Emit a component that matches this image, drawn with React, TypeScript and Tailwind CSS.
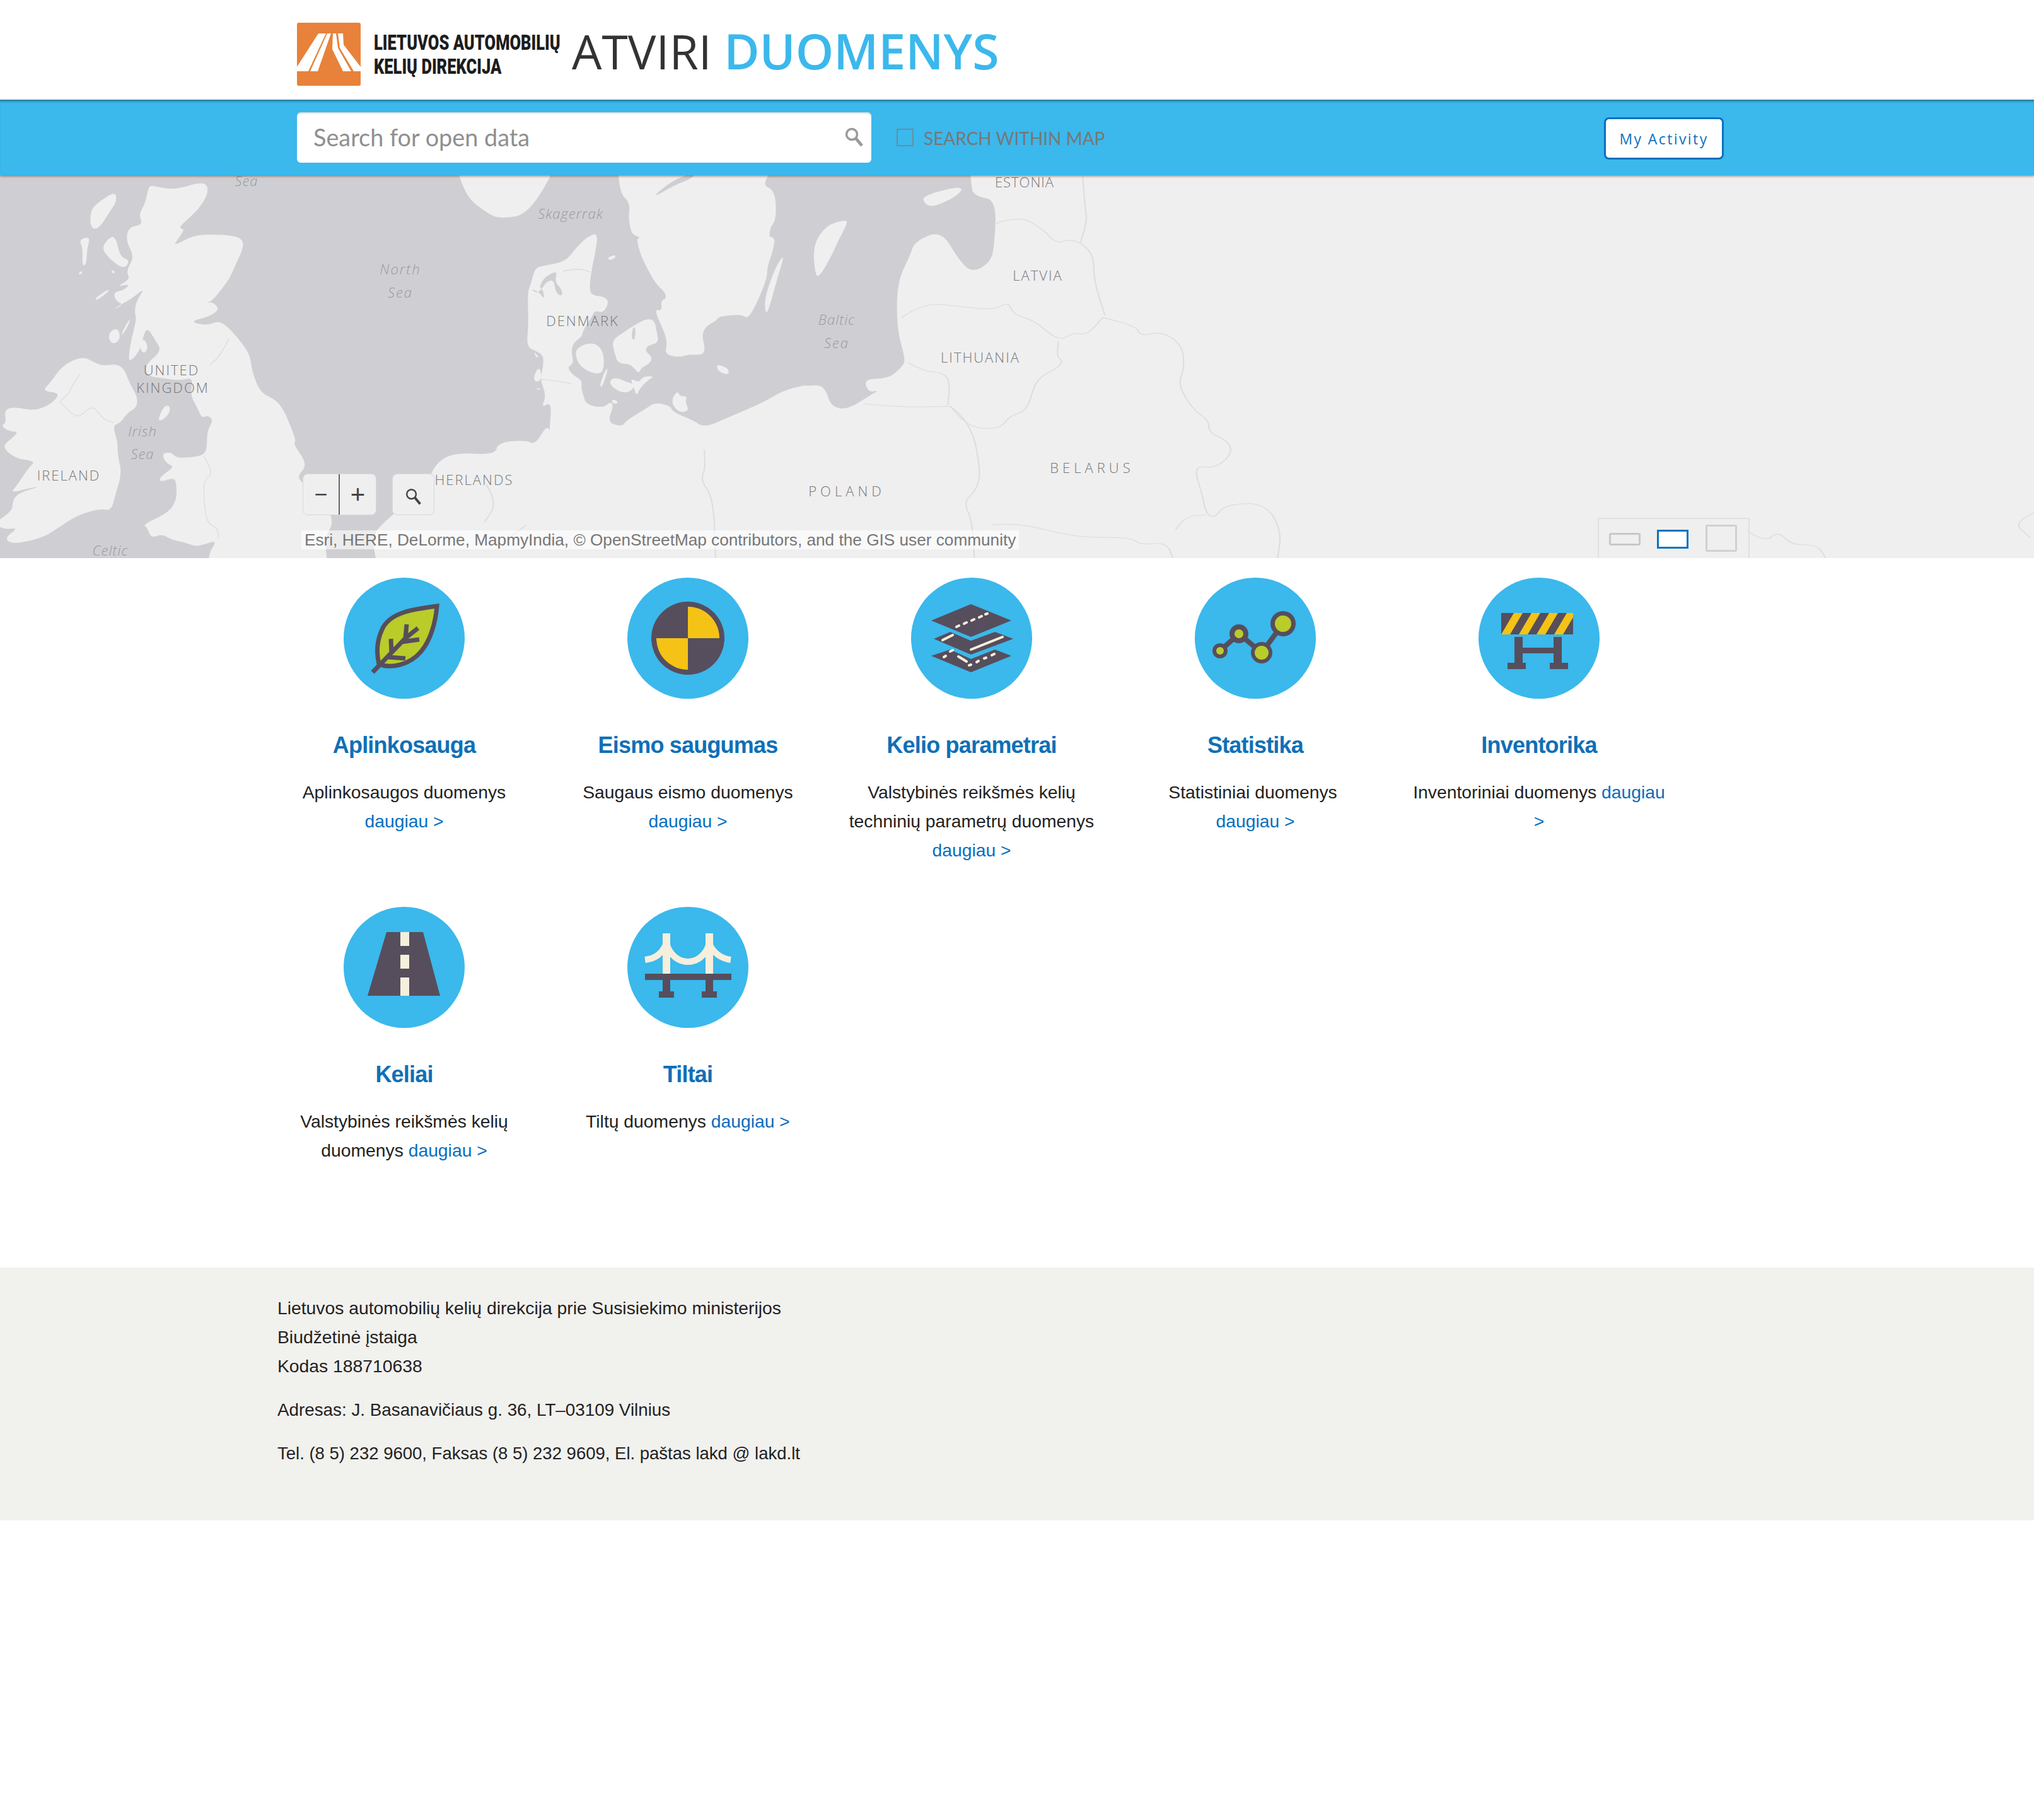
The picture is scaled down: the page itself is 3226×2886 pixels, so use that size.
import type { ReactNode } from "react";

const DARK = "#564e5c";
const CREAM = "#f5efdc";
const YELLOW = "#f4c315";
const GREEN = "#b9cc2a";
const WATER = "#cfcfd3";
const LAND = "#efefef";

const waterPoints =
  "-300,-300 2193,-300 2193,70 2208,105 2253,120 2248,310 2238,370 2198,410 2168,360 2128,240 2068,285 2058,340 2028,450 2028,640 2048,760 2038,790 2008,835 1953,835 1963,890 1988,880 1968,900 1915,960 1878,945 1868,880 1848,855 1778,880 1733,920 1733,1100 1250,1100 1240,1010 1210,1100 1190,1080 1125,1090 1120,1140 1030,1130 985,1170 960,1280 885,1380 830,1480 900,1800 -300,1800";

// traced on the wide map, overview scale
const overviewLand = [
  // Norway
  "1020,-100 1050,100 1100,170 1130,195 1200,175 1280,-100",
  // Sweden, north part
  "1395,-100 1400,90 1425,130 1420,200 1435,290 1740,290 1740,230 1755,200 1753,80 1718,55 1793,-100",
  // Gotland, Saaremaa
  "1908,200 1918,205 1893,290 1878,350 1853,425 1843,420 1838,300 1868,220",
  "2088,100 2178,60 2168,100 2108,150 2088,130",
];

const lakes = ["1470,115 1525,60 1568,30 1568,10 1520,40"];

// traced around Denmark, 3x from (800,380)
const balticLand = [
  // Jutland and the German coast
  "445,-35 435,50 412,160 405,230 415,265 480,272 497,300 470,350 430,335 415,370 375,430 370,460 330,490 318,530 330,590 300,605 320,640 370,670 365,700 375,740 390,785 470,800 505,770 520,790 490,870 560,890 580,860 680,800 715,775 790,790 800,820 900,860 950,895 1080,840 1240,770 1340,710 1500,680 1510,1000 210,1000 215,900 225,770 175,800 200,740 170,670 185,600 185,550 150,530 105,510 115,400 110,250 125,215 145,135 185,125 290,105 340,40 390,-10",
  // South Sweden
  "625,-40 640,50 670,120 720,210 765,250 770,280 745,290 750,340 710,330 780,480 760,545 830,560 880,545 945,550 955,510 940,460 955,415 1010,385 1020,365 1130,355 1165,380 1250,190 1250,130 1280,50 1290,-40",
  // Zealand
  "510,480 570,440 620,405 680,375 715,385 725,440 735,490 680,505 670,530 705,560 690,590 650,610 640,640 600,590 540,590 525,540",
  // Funen
  "335,530 370,500 430,490 470,530 475,600 460,640 400,630 350,590",
  // Langeland, Lolland, Falster
  "495,610 465,705 452,695 480,620",
  "500,670 530,655 590,680 620,690 605,720 560,730 510,700",
  "600,660 640,680 660,650 715,650 680,670 640,715 630,745 610,690",
  // Laeso, Fehmarn, Bornholm, Rugen
  "490,85 525,72 530,85 500,100",
  "510,760 535,765 540,780 515,780",
  "1010,590 1070,615 1065,645 1015,625",
  "800,750 825,720 835,745 870,745 860,775 880,810 840,825 800,790",
  // North Frisian islands
  "140,530 165,560 150,560",
  "135,660 165,600 180,660 155,680",
  "150,705 175,710 160,715",
  // Oland
  "1335,65 1300,180 1255,345 1240,345 1240,270 1290,130",
];

const balticWater = [
  "125,230 170,255 190,285 185,240 165,225 190,180 235,155 250,155 240,200 275,240 275,270 245,255 235,190 200,200 175,240 150,255",
  "610,420 625,415 620,480 605,470",
];

// traced around Scotland, 3x from (0,280); the south continues at y + 900
const britainLand = [
  "715,40 800,60 860,55 940,30 985,35 990,80 950,150 880,215 850,245 880,250 845,300 825,330 920,280 1000,275 1110,280 1155,300 1158,340 1120,420 1095,480 1060,530 1010,590 975,605 1010,595 1045,630 1000,665 900,690 985,710 1040,685 1090,720 1150,790 1190,850 1200,930 1240,1030 1310,1060 1350,1110 1380,1180 1410,1260 1395,1270 1450,1350 1450,1390 1415,1425 1440,1460 1491,1491 1599,1632 1536,1728 1590,1989 985,1989 990,1795 1035,1730 970,1750 930,1760 880,1740 820,1730 770,1700 720,1720 700,1670 680,1655 800,1600 840,1540 840,1470 830,1430 760,1455 760,1430 830,1380 800,1370 775,1340 780,1310 830,1330 860,1340 960,1330 985,1300 985,1210 1015,1160 990,1135 960,1150 940,1100 905,1040 920,955 860,970 780,960 700,950 690,895 770,830 740,780 710,730 690,730 665,830 625,875 610,870 625,770 650,680 640,640 650,590 690,530 640,570 610,590 530,635 590,610 550,590 540,550 590,540 620,510 550,525 620,490 600,450 640,380 600,310 610,240 680,230 660,180 690,130 705,60",
  // Lewis, Uists, Barra
  "430,160 470,120 550,70 555,120 520,170 470,250 430,245",
  "375,300 430,285 415,340 410,425 390,420 395,340",
  "370,465 390,445 390,465",
  // Skye, Rum, Coll
  "480,340 530,280 555,300 570,380 620,400 590,440 530,400",
  "525,450 545,445 545,465",
  "450,580 515,535 520,545 460,590",
  // Jura, Islay, Arran
  "575,750 620,670 615,700 585,750",
  "515,770 525,735 560,720 575,770 540,800",
  // Man, Anglesey
  "750,1160 780,1090 810,1090 805,1130 770,1160",
  "775,1320 810,1310 845,1340 810,1375 785,1350",
  // Ireland
  "300,895 395,855 450,885 490,900 580,890 620,990 655,1050 650,1100 605,1125 575,1170 535,1185 560,1260 560,1330 580,1410 550,1510 530,1590 480,1580 370,1610 280,1670 200,1720 60,1750 20,1720 90,1670 20,1680 -30,1650 60,1590 60,1540 90,1505 190,1475 150,1480 50,1505 80,1470 140,1380 170,1355 70,1340 10,1285 50,1250 90,1215 40,1210 5,1185 30,1170 20,1110 70,1095 160,1115 240,1085 290,1030 200,1020 240,980",
];

const britainArran = ["665,790 685,770 705,810 690,840 670,830"];

const overviewBorders = [
  "1100,1260 1125,1330 1095,1410",
  "1190,1420 1130,1500",
  "2248,215 2303,180 2358,235 2388,295 2418,275 2448,295 2473,345 2473,440 2498,580",
  "2448,25 2453,150 2458,200 2443,290",
  "2038,590 2088,530 2168,545 2248,560 2278,525 2293,580 2338,600 2393,685 2428,650 2458,660 2493,590",
  "2393,685 2388,750 2403,760 2393,790 2358,820 2338,860 2323,960 2283,985 2268,1020 2248,1035 2193,1030 2148,945",
  "2053,770 2088,805 2133,810 2148,850 2143,940",
  "1953,935 2038,950 2148,945",
  "2148,945 2193,1000 2218,1200 2208,1280 2178,1330 2198,1400 2203,1560",
  "2493,590 2568,620 2578,665 2628,645 2673,700 2678,790 2663,860 2698,960 2733,1000 2733,1050 2773,1080 2788,1130 2748,1195 2698,1180 2718,1300 2728,1380 2748,1390 2768,1340 2858,1330 2898,1440 2888,1560",
  "2243,1420 2303,1410 2428,1470 2558,1470 2578,1500 2638,1490 2653,1560",
  "2658,1440 2678,1385 2728,1380",
  "1588,1060 1598,1180 1583,1240 1613,1310 1618,1560",
  "3950,1445 3990,1490 4020,1445 4050,1500 4110,1500 4130,1560",
  "4600,1370 4550,1410 4590,1470",
];

const balticBorders = ["175,665 240,670 320,685", "280,150 350,135 410,155"];

const britainBorders = [
  "285,1070 340,1130 380,1145 440,1085 490,1155 540,1170",
  "380,940 340,1000 330,1030 285,1070",
  "970,1330 1020,1410 970,1440 970,1540 985,1650 1035,1670 1040,1720",
  "1090,770 1050,850 1000,895",
];

const mapLabels = [
  { text: "Sea", x: 391, y: 286, italic: true, spacing: 1 },
  { text: "Skagerrak", x: 905, y: 338, italic: true, spacing: 1 },
  { text: "North", x: 635, y: 426, italic: true, spacing: 2 },
  { text: "Sea", x: 635, y: 463, italic: true, spacing: 2 },
  { text: "DENMARK", x: 924, y: 508, spacing: 2 },
  { text: "Baltic", x: 1327, y: 506, italic: true, spacing: 1 },
  { text: "Sea", x: 1327, y: 543, italic: true, spacing: 2 },
  { text: "ESTONIA", x: 1625, y: 288, spacing: 1 },
  { text: "LATVIA", x: 1646, y: 436, spacing: 2 },
  { text: "LITHUANIA", x: 1555, y: 566, spacing: 2 },
  { text: "BELARUS", x: 1732, y: 741, spacing: 6 },
  { text: "POLAND", x: 1343, y: 778, spacing: 6 },
  { text: "UNITED", x: 272, y: 586, spacing: 2 },
  { text: "KINGDOM", x: 274, y: 614, spacing: 2 },
  { text: "Irish", x: 226, y: 683, italic: true, spacing: 1 },
  { text: "Sea", x: 226, y: 719, italic: true, spacing: 1 },
  { text: "IRELAND", x: 109, y: 753, spacing: 2 },
  { text: "HERLANDS", x: 752, y: 760, spacing: 2 },
  { text: "Celtic", x: 175, y: 872, italic: true, spacing: 1 },
];

// rounds off the hand traced coast lines
function smooth(points: string, closed: boolean) {
  const pts = points.split(" ").map((p) => p.split(",").map(Number));
  const mid = (a: number[], b: number[]) => `${(a[0] + b[0]) / 2},${(a[1] + b[1]) / 2}`;
  if (closed) {
    let d = `M${mid(pts[pts.length - 1], pts[0])}`;
    pts.forEach((p, i) => {
      d += `Q${p[0]},${p[1]} ${mid(p, pts[(i + 1) % pts.length])}`;
    });
    return d + "Z";
  }
  let d = `M${pts[0][0]},${pts[0][1]}`;
  for (let i = 1; i < pts.length - 1; i++) {
    d += `Q${pts[i][0]},${pts[i][1]} ${mid(pts[i], pts[i + 1])}`;
  }
  const last = pts[pts.length - 1];
  return d + `L${last[0]},${last[1]}`;
}

function Shapes({ items, fill }: { items: string[]; fill: string }) {
  return (
    <>
      {items.map((p, i) => (
        <path key={i} d={smooth(p, true)} fill={fill} />
      ))}
    </>
  );
}

function Borders({ items, width }: { items: string[]; width: number }) {
  return (
    <>
      {items.map((p, i) => (
        <path key={i} d={smooth(p, false)} fill="none" stroke="#dddddd" strokeWidth={width} />
      ))}
    </>
  );
}

function MapArt() {
  return (
    <svg viewBox="0 0 3226 607" className="block h-full w-full">
      <rect width="3226" height="607" fill={LAND} />
      <g transform="translate(0,-8) scale(0.7015,0.396)">
        <path d={smooth(waterPoints, true)} fill={WATER} />
        <Shapes items={overviewLand} fill={LAND} />
        <Shapes items={lakes} fill={WATER} />
        <Borders items={overviewBorders} width={3} />
      </g>
      <g transform="translate(800,102) scale(0.3333)">
        <Shapes items={balticLand} fill={LAND} />
        <Shapes items={balticWater} fill={WATER} />
        <Borders items={balticBorders} width={4} />
      </g>
      <g transform="translate(0,2) scale(0.3333)">
        <Shapes items={britainLand} fill={LAND} />
        <Shapes items={britainArran} fill={LAND} />
        <Borders items={britainBorders} width={4} />
      </g>
      {mapLabels.map((l) => (
        <text
          key={l.text + l.x}
          x={l.x}
          y={l.y - 278}
          textAnchor="middle"
          dominantBaseline="central"
          fontFamily="'Open Sans', sans-serif"
          fontSize="22"
          fontWeight="300"
          fontStyle={l.italic ? "italic" : "normal"}
          letterSpacing={l.spacing}
          fill={l.italic ? "#9a9a9f" : "#777777"}
        >
          {l.text}
        </text>
      ))}
    </svg>
  );
}

function LogoMark() {
  return (
    <svg viewBox="0 0 101 100" className="mt-[14px] h-[100px] w-[101px] shrink-0">
      <rect width="101" height="100" rx="3" fill="#e8823a" />
      <g fill="#ffffff">
        <polygon points="34,17 46,17 18,77 0,77 0,70" />
        <polygon points="48,17 54,17 33,77 21,77" />
        <polygon points="57,17 62,17 65,40 86,77 73,77 56,42" />
        <polygon points="65,17 73,17 74,35 101,70 101,77 90,77 68,40" />
      </g>
    </svg>
  );
}

function LeafIcon() {
  return (
    <g>
      <path
        d="M148 45C110 50 75 55 62 80C52 100 52 120 56 137C75 145 105 138 122 118C138 100 146 70 148 45Z"
        fill={GREEN}
        stroke={DARK}
        strokeWidth="7"
      />
      <path
        d="M46 150L98 96L100 74M98 96L118 80M92 102L120 98M76 120L75 97M70 126L98 128"
        fill="none"
        stroke={DARK}
        strokeWidth="7"
      />
    </g>
  );
}

function CrashIcon() {
  return (
    <g>
      <circle cx="96" cy="96" r="58" fill={DARK} />
      <path d="M96 46A50 50 0 0 1 146 96L96 96Z" fill={YELLOW} />
      <path d="M96 146A50 50 0 0 1 46 96L96 96Z" fill={YELLOW} />
    </g>
  );
}

function LayersIcon() {
  return (
    <g>
      <polygon points="95,42 159,68 95,94 32,68" fill={DARK} />
      <polygon points="62,86 95,100 133,86 162,97 95,122 36,97" fill={DARK} />
      <polygon points="62,114 95,129 133,114 159,124 95,150 32,124" fill={DARK} />
      <g stroke={CREAM} strokeWidth="4" strokeLinecap="round" fill="none">
        <path d="M72 78L76 76M84 73L88 71M96 68L100 66M108 63L112 61M118 58L121 57" />
        <path d="M50 99L66 91M95 114L145 94" />
        <path d="M52 126L55 124M62 117L66 115M75 125L88 133M92 139L95 138M104 134L107 132M116 128L119 127M128 123L132 121" />
      </g>
    </g>
  );
}

function StatsIcon() {
  return (
    <g>
      <polyline points="40,116 70,89 106,119 140,73" fill="none" stroke={DARK} strokeWidth="8" />
      <circle cx="40" cy="116" r="12" fill={DARK} />
      <circle cx="40" cy="116" r="6" fill={GREEN} />
      <circle cx="70" cy="89" r="15" fill={DARK} />
      <circle cx="70" cy="89" r="7" fill={GREEN} />
      <circle cx="106" cy="119" r="17" fill={DARK} />
      <circle cx="106" cy="119" r="11" fill={GREEN} />
      <circle cx="140" cy="73" r="20" fill={DARK} />
      <circle cx="140" cy="73" r="13" fill={GREEN} />
    </g>
  );
}

function BarrierIcon() {
  return (
    <g>
      <rect x="36" y="56" width="114" height="34" fill={DARK} />
      <g fill={YELLOW}>
        <polygon points="56,56 70,56 50,90 36,90" />
        <polygon points="84,56 98,56 78,90 64,90" />
        <polygon points="112,56 126,56 106,90 92,90" />
        <polygon points="140,56 150,56 150,63 134,90 120,90" />
      </g>
      <g fill={DARK}>
        <rect x="57" y="94" width="13" height="43" />
        <rect x="119" y="94" width="13" height="43" />
        <rect x="57" y="111" width="75" height="9" />
        <rect x="46" y="135" width="29" height="10" />
        <rect x="113" y="135" width="29" height="10" />
      </g>
    </g>
  );
}

function RoadIcon() {
  return (
    <g>
      <polygon points="68,40 126,40 153,141 38,141" fill={DARK} />
      <g fill={CREAM}>
        <rect x="90" y="40" width="14" height="22" />
        <rect x="90" y="76" width="14" height="22" />
        <rect x="90" y="112" width="14" height="29" />
      </g>
    </g>
  );
}

function BridgeIcon() {
  return (
    <g>
      <g fill={CREAM}>
        <rect x="56" y="42" width="12" height="64" />
        <rect x="124" y="42" width="12" height="64" />
      </g>
      <path
        d="M28 84C45 82 55 74 62 58M62 58C68 78 82 87 96 87C110 87 124 78 130 58M130 58C136 74 150 82 164 84"
        fill="none"
        stroke={CREAM}
        strokeWidth="10"
      />
      <g fill={DARK}>
        <rect x="28" y="106" width="137" height="10" />
        <rect x="56" y="116" width="12" height="20" />
        <rect x="124" y="116" width="12" height="20" />
        <rect x="50" y="134" width="24" height="10" />
        <rect x="118" y="134" width="24" height="10" />
      </g>
    </g>
  );
}

type Category = {
  title: string;
  text: string;
  icon: ReactNode;
  lineBreak?: boolean;
};

const categories: Category[] = [
  { title: "Aplinkosauga", text: "Aplinkosaugos duomenys", icon: <LeafIcon /> },
  { title: "Eismo saugumas", text: "Saugaus eismo duomenys", icon: <CrashIcon /> },
  { title: "Kelio parametrai", text: "Valstybinės reikšmės kelių techninių parametrų duomenys", icon: <LayersIcon /> },
  { title: "Statistika", text: "Statistiniai duomenys", icon: <StatsIcon />, lineBreak: true },
  { title: "Inventorika", text: "Inventoriniai duomenys", icon: <BarrierIcon /> },
  { title: "Keliai", text: "Valstybinės reikšmės kelių duomenys", icon: <RoadIcon /> },
  { title: "Tiltai", text: "Tiltų duomenys", icon: <BridgeIcon /> },
];

function CategoryCard({ item }: { item: Category }) {
  return (
    <div className="flex flex-col items-center px-[22px] pt-[31px] pb-[36px] text-center">
      <svg viewBox="0 0 192 192" className="h-[192px] w-[192px]">
        <circle cx="96" cy="96" r="96" fill="#3bb8ec" />
        {item.icon}
      </svg>
      <h3 className="mt-[51px] text-[36px] leading-[46px] font-bold tracking-[-0.8px] text-[#0f70b7]">
        {item.title}
      </h3>
      <p className="mt-[28px] text-[28.3px] leading-[46px] text-[#222222]">
        {item.text}
        {item.lineBreak ? (
          <>
            {"\u00a0"}
            <br />
          </>
        ) : (
          " "
        )}
        <a href="#" className="text-[#0a6ebd]">
          daugiau &gt;
        </a>
      </p>
    </div>
  );
}

export default function App() {
  return (
    <div className="min-h-[2886px] bg-white font-['Liberation_Sans',sans-serif] text-[#222222]">
      {/* Logo row */}
      <header className="flex h-[158px] items-center pl-[471px]">
        <LogoMark />
        <div className="mt-[14px] ml-[21px] flex w-[294px] flex-col font-['Roboto',sans-serif] text-[34px] leading-[38px] font-black text-[#1d1d1d]">
          <span className="origin-left scale-x-[0.75] whitespace-nowrap">LIETUVOS AUTOMOBILIŲ</span>
          <span className="origin-left scale-x-[0.75] whitespace-nowrap">KELIŲ DIREKCIJA</span>
        </div>
        <h1 className="mt-[3px] ml-[20px] font-['Open_Sans',sans-serif] text-[75px] leading-none whitespace-nowrap text-[#333333]">
          ATVIRI <span className="text-[77px] font-semibold text-[#3bb8ec]">DUOMENYS</span>
        </h1>
      </header>

      {/* Search bar */}
      <div className="relative z-10 flex h-[120px] items-center bg-[#3bb8ec] pr-[492px] pl-[471px] shadow-[inset_0_5px_4px_-3px_rgba(0,0,0,0.45),0_2px_3px_rgba(0,0,0,0.35)]">
        <div className="flex h-[80px] w-[911px] items-center justify-between rounded-[6px] bg-white pr-[12px] pl-[26px] shadow-[inset_0_2px_2px_rgba(0,0,0,0.15)]">
          <span className="font-['Lato',sans-serif] text-[37.8px] text-[#8f8f8f]">Search for open data</span>
          <svg viewBox="0 0 30 32" className="h-[32px] w-[30px]" fill="none" stroke="#9a9a9a">
            <circle cx="11" cy="11" r="8.5" strokeWidth="3.5" />
            <path d="M17 17L27 29" strokeWidth="5" />
          </svg>
        </div>
        <span className="ml-[40px] h-[28px] w-[27px] border-2 border-[#6f8b9a]" />
        <span className="mt-[2px] ml-[16px] font-['Lato',sans-serif] text-[28px] whitespace-nowrap text-[#777777]">
          SEARCH WITHIN MAP
        </span>
        <button
          type="button"
          className="mt-[2px] ml-auto flex h-[67px] w-[190px] items-center justify-center rounded-[8px] border-[3px] border-[#0a72bd] bg-white pt-[2px] font-['Open_Sans',sans-serif] text-[23px] tracking-[2.4px] text-[#0a72bd]"
        >
          My Activity
        </button>
      </div>

      {/* Map */}
      <div className="relative h-[607px] overflow-hidden">
        <MapArt />
        <div className="absolute top-[473px] left-[480px] flex h-[66px] w-[117px] rounded-[8px] border border-[#d8d8d8] bg-[#efefef] text-[#444444]">
          <span className="flex w-[58px] items-center justify-center border-r-2 border-[#666666] text-[36px] leading-none">
            −
          </span>
          <span className="flex flex-1 items-center justify-center text-[40px] leading-none">+</span>
        </div>
        <div className="absolute top-[473px] left-[622px] flex h-[66px] w-[67px] items-center justify-center rounded-[8px] border border-[#d8d8d8] bg-[#efefef]">
          <svg viewBox="0 0 30 32" className="mt-[8px] h-[28px] w-[26px]" fill="none" stroke="#444444">
            <circle cx="11" cy="11" r="8.5" strokeWidth="2.8" />
            <path d="M17 17L27 29" strokeWidth="4.5" />
          </svg>
        </div>
        <div className="absolute top-[563px] left-[478px] h-[30px] bg-white/60 px-[5px] text-[26.2px] leading-[30px] whitespace-nowrap text-[#777777]">
          Esri, HERE, DeLorme, MapmyIndia, © OpenStreetMap contributors, and the GIS user community
        </div>
        <div className="absolute top-[543px] left-[2534px] h-[66px] w-[241px] border-x-2 border-t-2 border-[#e0e0e0]">
          <span className="absolute top-[22px] left-[16px] h-[20px] w-[50px] rounded-[3px] border-[3px] border-[#c8c8c8]" />
          <span className="absolute top-[17px] left-[92px] h-[30px] w-[50px] border-[3px] border-[#0a72bd] bg-white" />
          <span className="absolute top-[9px] left-[169px] h-[43px] w-[50px] rounded-[3px] border-[3px] border-[#d0d0d0]" />
        </div>
      </div>

      {/* Categories */}
      <main className="ml-[416px] grid w-[2250px] grid-cols-5 pb-[127px]">
        {categories.map((item) => (
          <CategoryCard key={item.title} item={item} />
        ))}
      </main>

      {/* Footer */}
      <footer className="bg-[#f1f1ee] pt-[41px] pb-[83px] pl-[440px] leading-[46px] text-[#222222]">
        <p className="text-[28.3px]">
          Lietuvos automobilių kelių direkcija prie Susisiekimo ministerijos
          <br />
          Biudžetinė įstaiga
          <br />
          Kodas 188710638
        </p>
        <p className="mt-[24px] text-[27.8px]">Adresas: J. Basanavičiaus g. 36, LT–03109 Vilnius</p>
        <p className="mt-[23px] text-[27.5px]">Tel. (8 5) 232 9600, Faksas (8 5) 232 9609, El. paštas lakd @ lakd.lt</p>
      </footer>
    </div>
  );
}
